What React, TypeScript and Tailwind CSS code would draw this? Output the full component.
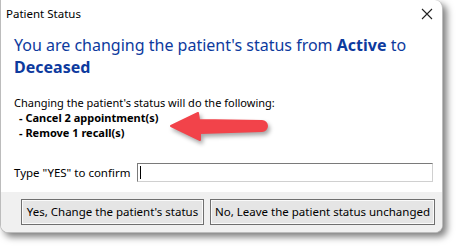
import React from "react";

const ui = { fontFamily: '"Noto Sans", "Open Sans", sans-serif' };

const Arrow = () => (
  <svg
    className="absolute left-[168px] top-[108px] drop-shadow-[2px_3px_2px_rgba(0,0,0,0.35)]"
    width="102"
    height="38"
    viewBox="0 0 102 38"
  >
    <path
      d="M3 18 L30 5 L31 12 L94 13 A5 5 0 0 1 94 23 L32 25 L32 32 Z"
      fill="#f2434a"
      stroke="#f2434a"
      strokeWidth="2"
      strokeLinejoin="round"
    />
  </svg>
);

const WinButton = ({ children, w }: { children: React.ReactNode; w: string }) => (
  <button
    className={`h-[26px] whitespace-nowrap border border-[#6f6f6f] bg-[#e5e5e5] text-[11.5px] leading-none text-black shadow-[inset_0_0_0_1px_#fafafa] ${w}`}
  >
    {children}
  </button>
);

export default function App() {
  return (
    <div className="relative h-[250px] w-[460px] overflow-hidden bg-white" style={ui}>
      {/* dialog window */}
      <div className="flex h-[233px] w-[443px] flex-col overflow-hidden rounded-tr-[8px] rounded-br-[8px] rounded-bl-[8px] border-l border-r border-b border-[#bcbcbc] bg-white shadow-[4px_4px_7px_rgba(0,0,0,0.5)]">
        {/* title bar */}
        <div className="flex h-[27px] items-center justify-between pl-[5px] pr-[8px]">
          <span className="text-[11.5px] text-black">Patient Status</span>
          <svg width="12" height="12" viewBox="0 0 12 12" className="mr-[1px]">
            <path d="M1 1 L11 11 M11 1 L1 11" stroke="#222" strokeWidth="1.1" />
          </svg>
        </div>

        {/* content */}
        <div className="flex flex-1 flex-col pl-[13px] pr-[9px]">
          <div className="mt-[7px] text-[16px] leading-[22px] text-[#0d3a9e]">
            You are changing the patient's status from <b>Active</b> to
            <br />
            <b>Deceased</b>
          </div>

          <div className="mt-[17px] text-[11px] leading-[15px] text-black">
            <div>Changing the patient's status will do the following:</div>
            <div className="pl-[5px] font-bold">- Cancel 2 appointment(s)</div>
            <div className="pl-[5px] font-bold">- Remove 1 recall(s)</div>
          </div>

          <div className="mt-[23px] flex items-center">
            <span className="w-[123px] text-[11.5px] text-black">Type "YES" to confirm</span>
            <div className="flex h-[19px] flex-1 items-center border border-[#7a7a7a] border-b-[#d0d0d0] border-r-[#d0d0d0] pl-[2px]">
              <div className="h-[13px] w-px bg-black" />
            </div>
          </div>
        </div>

        {/* footer */}
        <div className="flex h-[40px] items-center gap-[6px] bg-[#f0f0f0] pb-[1px] pl-[20px]">
          <WinButton w="w-[183px]">Yes, Change the patient's status</WinButton>
          <WinButton w="w-[225px]">No, Leave the patient status unchanged</WinButton>
        </div>
      </div>

      <Arrow />
    </div>
  );
}
